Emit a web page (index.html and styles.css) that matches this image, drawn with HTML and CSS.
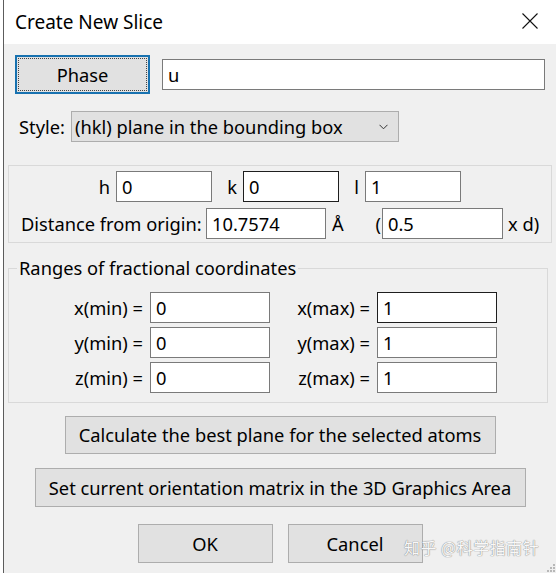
FILE: index.html
```html
<!DOCTYPE html>
<html>
<head>
<meta charset="utf-8">
<link rel="stylesheet" href="styles.css">
</head>
<body>
<div class="window">
  <div class="titlebar">
    <span class="title">Create New Slice</span>
    <svg class="close" width="16" height="16" viewBox="0 0 16 16"><path d="M0.5 0.5 L15.5 15.5 M15.5 0.5 L0.5 15.5" stroke="#111" stroke-width="1.1" fill="none"/></svg>
  </div>
  <div class="content">
    <div class="phase-row">
      <div class="btn phase">Phase</div>
      <div class="field wide">u</div>
    </div>
    <div class="style-row">
      <span class="style-label">Style:</span>
      <div class="select">
        <span>(hkl) plane in the bounding box</span>
        <svg class="chev" width="9" height="6" viewBox="0 0 9 6"><path d="M0.5 0.8 L4.5 4.8 L8.5 0.8" stroke="#333" stroke-width="1" fill="none"/></svg>
      </div>
    </div>
    <div class="group hkl">
      <div class="hkl-row1">
        <span class="lbl-r">h</span><div class="field">0</div>
        <span class="lbl-r">k</span><div class="field focus">0</div>
        <span class="lbl-r">l</span><div class="field">1</div>
      </div>
      <div class="hkl-row2">
        <span class="dist-label">Distance from origin:</span>
        <div class="field">10.7574</div>
        <span class="unit"><span>Å</span><span>(</span></span>
        <div class="field">0.5</div>
        <span class="xd">x d)</span>
      </div>
    </div>
    <fieldset class="ranges">
      <legend>Ranges of fractional coordinates</legend>
      <div class="range-grid">
        <span class="lbl-r">x(min) =</span><div class="field">0</div>
        <span class="lbl-r">x(max) =</span><div class="field focus">1</div>
        <span class="lbl-r">y(min) =</span><div class="field">0</div>
        <span class="lbl-r">y(max) =</span><div class="field">1</div>
        <span class="lbl-r">z(min) =</span><div class="field">0</div>
        <span class="lbl-r">z(max) =</span><div class="field">1</div>
      </div>
    </fieldset>
    <div class="btn-row calc-row"><div class="btn calc">Calculate the best plane for the selected atoms</div></div>
    <div class="btn-row set-row"><div class="btn set">Set current orientation matrix in the 3D Graphics Area</div></div>
    <div class="btn-row ok-row">
      <div class="btn okc">OK</div>
      <div class="btn okc">Cancel</div>
    </div>
  </div>
  <div class="watermark">知乎 @科学指南针</div>
  <svg class="grip" width="8" height="8" viewBox="0 0 8 8">
    <rect x="6" y="0" width="2" height="2" fill="#b8b8b8"/>
    <rect x="3" y="3" width="2" height="2" fill="#b8b8b8"/>
    <rect x="6" y="3" width="2" height="2" fill="#b8b8b8"/>
    <rect x="0" y="6" width="2" height="2" fill="#b8b8b8"/>
    <rect x="3" y="6" width="2" height="2" fill="#b8b8b8"/>
    <rect x="6" y="6" width="2" height="2" fill="#b8b8b8"/>
  </svg>
</div>
</body>
</html>
```
FILE: styles.css
```css
* { box-sizing: border-box; }
html, body { margin: 0; padding: 0; }
body {
  width: 556px;
  height: 573px;
  overflow: hidden;
  background: #ffffff;
  font-family: "Noto Sans", "Open Sans", "DejaVu Sans", sans-serif;
  font-size: 18.3px;
  color: #000;
}
.window {
  position: relative;
  margin-left: 3px;
  height: 573px;
  border-left: 1px solid #5c5c5c;
  background: #f0f0f0;
}
.titlebar {
  height: 44px;
  background: #ffffff;
  display: flex;
  align-items: center;
  justify-content: space-between;
  padding: 0 18px 0 11px;
}
.title { font-size: 19px; line-height: 24px; margin-top: -1px; }
.close { display: block; margin-top: -2px; }

.content { padding: 0 4px; }

.field {
  height: 31px;
  border: 1px solid #7a7a7a;
  background: #fff;
  padding-left: 5px;
  line-height: 29px;
  white-space: nowrap;
}
.field.focus { border-color: #1e1e1e; }

.btn {
  display: flex;
  align-items: center;
  justify-content: center;
  background: #e1e1e1;
  border: 1px solid #adadad;
  white-space: nowrap;
  line-height: 24px;
}

.phase-row {
  display: flex;
  align-items: center;
  gap: 12px;
  padding: 0 7px;
  margin-top: 11px;
}
.btn.phase {
  width: 135px;
  height: 39px;
  border: 2px solid #1872b0;
  outline: 1px dotted #444;
  outline-offset: -4px;
  flex: none;
}
.field.wide { flex: 1; }

.style-row {
  display: flex;
  align-items: center;
  margin-top: 17px;
  padding-left: 11px;
}
.style-label { width: 52px; flex: none; }
.select {
  width: 328px;
  height: 31px;
  background: #e1e1e1;
  border: 1px solid #adadad;
  display: flex;
  align-items: center;
  justify-content: space-between;
  padding: 0 10px 0 3px;
}
.chev { display: block; }

.group {
  border: 1px solid #d9d9d9;
}
.hkl {
  margin-top: 23px;
  width: 544px;
  padding: 5px 0 3px;
  display: flex;
  flex-direction: column;
  gap: 6px;
}
.lbl-r {
  text-align: right;
  padding-right: 6px;
  white-space: nowrap;
}
.hkl-row1 {
  display: grid;
  grid-template-columns: 107px 96px 31px 96px 26px 96px;
  align-items: center;
}
.hkl-row2 {
  display: grid;
  grid-template-columns: 197px 120px 56px 121px auto;
  align-items: center;
}
.dist-label { padding-left: 12px; white-space: nowrap; }
.unit {
  display: flex;
  justify-content: space-between;
  padding: 0 1px 0 6px;
}
.xd { padding-left: 5px; white-space: nowrap; }

.ranges {
  margin: 13px 0 0;
  padding: 12px 0 9px;
  width: 540px;
  min-width: 0;
  border: 1px solid #d9d9d9;
}
.ranges legend {
  margin-left: 8px;
  padding: 0 2px;
  line-height: 24px;
}
.range-grid {
  display: grid;
  grid-template-columns: 103px 120px 93px 120px;
  column-gap: 7px;
  row-gap: 4px;
  align-items: center;
  padding-left: 31px;
}
.range-grid .lbl-r { padding-right: 0; }

.btn-row {
  display: flex;
  justify-content: center;
  gap: 15px;
}
.calc-row { margin-top: 13px; }
.btn.calc { width: 431px; height: 38px; }
.set-row { margin-top: 14px; }
.btn.set { width: 491px; height: 39px; }
.ok-row { margin-top: 17px; }
.btn.okc { width: 135px; height: 39px; }

.watermark {
  position: absolute;
  left: 400px;
  top: 536px;
  font-family: "Noto Sans CJK SC", "Noto Sans", sans-serif;
  font-size: 16px;
  line-height: 22px;
  color: #f8f8f8;
  text-shadow: 0 0 1px #8a8a8a, 0 0 1px #8a8a8a;
  letter-spacing: 0.5px;
}
.grip {
  position: absolute;
  right: 1px;
  bottom: 1px;
}
```
